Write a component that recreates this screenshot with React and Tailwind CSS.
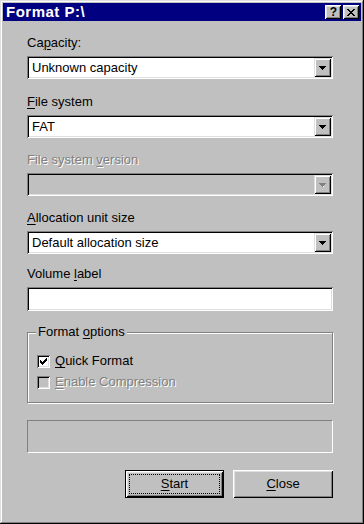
import React from "react";

const sunken =
  "shadow-[inset_1px_1px_0_#808080,inset_-1px_-1px_0_#ffffff,inset_2px_2px_0_#000000,inset_-2px_-2px_0_#dfdfdf]";
const raised =
  "shadow-[inset_1px_1px_0_#dfdfdf,inset_-1px_-1px_0_#000000,inset_2px_2px_0_#ffffff,inset_-2px_-2px_0_#808080]";
const raisedBtn =
  "shadow-[inset_1px_1px_0_#ffffff,inset_-1px_-1px_0_#000000,inset_2px_2px_0_#dfdfdf,inset_-2px_-2px_0_#808080]";

function U({ children }) {
  return <span className="underline underline-offset-[2px] decoration-1">{children}</span>;
}

function Arrow({ disabled }) {
  const c = disabled ? "#808080" : "#000000";
  return (
    <svg width="7" height="4" viewBox="0 0 7 4" shapeRendering="crispEdges">
      <rect x="0" y="0" width="7" height="1" fill={c} />
      <rect x="1" y="1" width="5" height="1" fill={c} />
      <rect x="2" y="2" width="3" height="1" fill={c} />
      <rect x="3" y="3" width="1" height="1" fill={c} />
      {disabled && <rect x="4" y="3" width="1" height="1" fill="#ffffff" />}
    </svg>
  );
}

function Combo({ value, disabled }) {
  return (
    <div
      className={`h-[23px] flex items-center ${disabled ? "bg-[#c0c0c0]" : "bg-white"} ${sunken}`}
    >
      <span className="flex-1 pl-[5px] leading-[16px] text-black">{value}</span>
      <div className={`w-[17px] h-[19px] mr-[2px] bg-[#c0c0c0] flex items-center justify-center ${raised}`}>
        <Arrow disabled={disabled} />
      </div>
    </div>
  );
}

function Label({ children, disabled, className = "" }) {
  return (
    <div
      className={`h-[16px] leading-[16px] ${disabled ? "text-[#808080] [text-shadow:1px_1px_0_#ffffff]" : "text-black"} ${className}`}
    >
      {children}
    </div>
  );
}

function Check({ checked, disabled }) {
  return (
    <div
      className={`w-[13px] h-[13px] flex items-center justify-center ${disabled ? "bg-[#c0c0c0]" : "bg-white"} ${sunken}`}
    >
      {checked && (
        <svg width="7" height="7" viewBox="0 0 7 7" shapeRendering="crispEdges">
          <rect x="6" y="0" width="1" height="3" fill="#000" />
          <rect x="5" y="1" width="1" height="3" fill="#000" />
          <rect x="4" y="2" width="1" height="3" fill="#000" />
          <rect x="3" y="3" width="1" height="3" fill="#000" />
          <rect x="2" y="4" width="1" height="3" fill="#000" />
          <rect x="1" y="3" width="1" height="3" fill="#000" />
          <rect x="0" y="2" width="1" height="3" fill="#000" />
        </svg>
      )}
    </div>
  );
}

export default function App() {
  return (
    <div
      className="w-[364px] h-[524px] bg-[#c0c0c0] p-[3px] flex flex-col text-[13px] shadow-[inset_-1px_-1px_0_#000000,inset_1px_1px_0_#dfdfdf,inset_-2px_-2px_0_#808080,inset_2px_2px_0_#ffffff]"
      style={{ fontFamily: '"Liberation Sans", Arial, sans-serif' }}
    >
      {/* Title bar */}
      <div className="h-[18px] bg-[#000080] flex items-center pl-[3px] pr-[2px]">
        <span className="flex-1 text-white font-bold text-[15px] tracking-[0.5px] leading-[18px]">Format P:\</span>
        <div className={`w-[16px] h-[14px] bg-[#c0c0c0] flex items-center justify-center ${raisedBtn}`}>
          <span className="text-black font-bold text-[12px] leading-[12px] pl-[1px]">?</span>
        </div>
        <div className={`w-[16px] h-[14px] ml-[2px] bg-[#c0c0c0] flex items-center justify-center ${raisedBtn}`}>
          <svg width="8" height="7" viewBox="0 0 8 7" shapeRendering="crispEdges">
            <rect x="0" y="0" width="2" height="1" fill="#000" />
            <rect x="6" y="0" width="2" height="1" fill="#000" />
            <rect x="1" y="1" width="2" height="1" fill="#000" />
            <rect x="5" y="1" width="2" height="1" fill="#000" />
            <rect x="2" y="2" width="4" height="1" fill="#000" />
            <rect x="3" y="3" width="2" height="1" fill="#000" />
            <rect x="2" y="4" width="4" height="1" fill="#000" />
            <rect x="1" y="5" width="2" height="1" fill="#000" />
            <rect x="5" y="5" width="2" height="1" fill="#000" />
            <rect x="0" y="6" width="2" height="1" fill="#000" />
            <rect x="6" y="6" width="2" height="1" fill="#000" />
          </svg>
        </div>
      </div>

      {/* Content */}
      <div className="pl-[24px] pr-[28px] flex flex-col">
        <Label className="mt-[14px] mb-[5px]">
          Ca<U>p</U>acity:
        </Label>
        <Combo value="Unknown capacity" />

        <Label className="mt-[15px] mb-[5px]">
          <U>F</U>ile system
        </Label>
        <Combo value="FAT" />

        <Label disabled className="mt-[14px] mb-[5px]">
          File system <U>v</U>ersion
        </Label>
        <Combo value="" disabled />

        <Label className="mt-[14px] mb-[5px]">
          <U>A</U>llocation unit size
        </Label>
        <Combo value="Default allocation size" />

        <Label className="mt-[12px] mb-[5px]">
          Volume <U>l</U>abel
        </Label>
        <div className={`h-[24px] bg-white ${sunken}`} />

        {/* Group box */}
        <div className="relative mt-[21px] h-[71px] border border-[#808080] shadow-[1px_1px_0_#ffffff,inset_1px_1px_0_#ffffff] flex flex-col pl-[9px] pt-[20px] gap-[5px]">
          <span className="absolute -top-[9px] left-[8px] px-[2px] bg-[#c0c0c0] leading-[16px] text-black">
            Format <U>o</U>ptions
          </span>
          <div className="flex items-center gap-[5px]">
            <Check checked />
            <span className="leading-[16px] text-black">
              <U>Q</U>uick Format
            </span>
          </div>
          <div className="flex items-center gap-[5px]">
            <Check disabled />
            <span className="leading-[16px] text-[#808080] [text-shadow:1px_1px_0_#ffffff]">
              <U>E</U>nable Compression
            </span>
          </div>
        </div>

        {/* Progress */}
        <div className="mt-[17px] h-[33px] border-t border-l border-[#808080] border-b border-r border-b-white border-r-white" />

        {/* Buttons */}
        <div className="mt-[17px] flex justify-end gap-[9px]">
          <div className="w-[99px] h-[28px] border border-black">
            <div className={`w-full h-full bg-[#c0c0c0] p-[3px] ${raisedBtn}`}>
              <div className="w-full h-full border border-dotted border-black flex items-center justify-center text-black">
                <U>S</U>tart
              </div>
            </div>
          </div>
          <div className={`w-[100px] h-[28px] bg-[#c0c0c0] flex items-center justify-center text-black ${raisedBtn}`}>
            <U>C</U>lose
          </div>
        </div>
      </div>
    </div>
  );
}
